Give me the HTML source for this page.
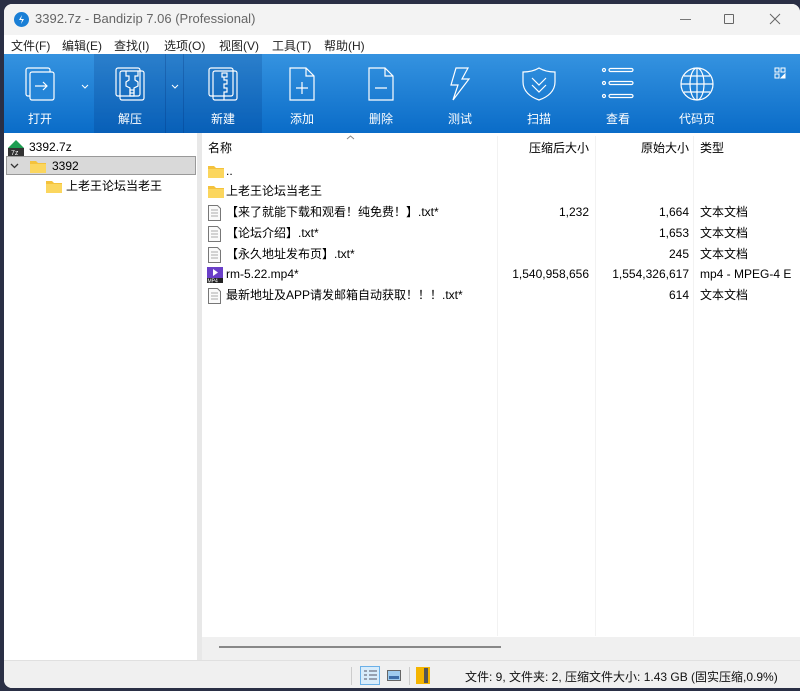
<!DOCTYPE html>
<html><head><meta charset="utf-8"><style>
*{margin:0;padding:0;box-sizing:border-box}
body{width:800px;height:691px;overflow:hidden;background:#2a2f45;font-family:"Liberation Sans","Noto Sans CJK SC",sans-serif;font-size:12px;color:#000;position:relative}
.win{position:absolute;left:4px;top:4px;width:796px;height:684px;background:#f0f0f0;border-radius:8px 8px 0 8px;overflow:hidden}
.abs{position:absolute}
.title{left:0;top:0;width:796px;height:31px;background:#f3f3f3;}
.menu{left:0;top:31px;width:796px;height:20px;background:#fff}
.menu span{position:absolute;top:2px;font-size:12px;color:#222}
.tb{left:0;top:50px;width:796px;height:79px;background:linear-gradient(#3593e0,#0a6cc8)}
.btn{position:absolute;top:0;height:79px;text-align:center;color:#fff;font-size:12px}
.btn svg{position:absolute;top:12px;left:50%;margin-left:-18px}
.btn .l{position:absolute;top:56px;width:100%;left:0}
.left{left:0;top:129px;width:193px;height:527px;background:#fff}
.right{left:198px;top:129px;width:598px;height:527px;background:#fff}
.right span{line-height:14px}
.row{position:absolute;left:0;height:21px;line-height:21px;white-space:nowrap}
.right .row span{line-height:21px}
.n{position:absolute;text-align:right}
.status{left:0;top:656px;width:796px;height:28px;background:#f0f0f0;border-top:1px solid #e0e0e0}
</style></head><body>
<div class="win">
 <div class="abs title">
  <svg class="abs" style="left:10px;top:8px" width="15" height="15"><circle cx="7.5" cy="7.5" r="7.5" fill="#1a7fd6"/><path d="M8 3L5 8h3l-1 4 3-5H7z" fill="#fff"/></svg>
  <span class="abs" style="left:31px;top:7px;font-size:13px;color:#666">3392.7z - Bandizip 7.06 (Professional)</span>
  <div class="abs" style="left:676px;top:15px;width:11px;height:1px;background:#777"></div>
  <div class="abs" style="left:720px;top:10px;width:10px;height:10px;border:1px solid #666;border-radius:1px"></div>
  <svg class="abs" style="left:765px;top:9px" width="12" height="12"><path d="M1 1L11 11M11 1L1 11" stroke="#666" stroke-width="1"/></svg>
 </div>
 <div class="abs menu">
  <span style="left:7px">文件(F)</span><span style="left:58px">编辑(E)</span><span style="left:110px">查找(I)</span><span style="left:160px">选项(O)</span><span style="left:215px">视图(V)</span><span style="left:268px">工具(T)</span><span style="left:320px">帮助(H)</span>
 </div>
 <div class="abs tb">
  <div class="abs" style="left:90px;top:0;width:168px;height:79px;background:rgba(0,40,110,.18)"></div>
  <div class="abs" style="left:161px;top:0;width:1px;height:79px;background:rgba(0,40,110,.25)"></div>
  <div class="abs" style="left:179px;top:0;width:1px;height:79px;background:rgba(0,40,110,.25)"></div>
  <div class="btn" style="left:0;width:72px"><svg width="36" height="36" fill="none" stroke="#fff" stroke-width="1.2"><rect x="4" y="2" width="24" height="28" rx="2"/><rect x="8" y="6" width="24" height="28" rx="2" fill="#2585d8"/><path d="M13 20h12M21 16l4 4-4 4"/></svg><div class="l">打开</div></div>
  <svg class="abs" style="left:77px;top:30px" width="8" height="5" fill="none" stroke="#fff"><path d="M1 1l3 3 3-3"/></svg>
  <div class="btn" style="left:90px;width:72px"><svg width="36" height="36" fill="none" stroke="#fff" stroke-width="1.2"><rect x="4" y="2" width="24" height="28" rx="2"/><rect x="8" y="5" width="24" height="29" rx="2"/><path d="M14 5v5h3v4l-3 2v4l4 2v8h4v-8l4-2v-4l-3-2v-4h3V5"/><rect x="18" y="24" width="4" height="3"/></svg><div class="l">解压</div></div>
  <svg class="abs" style="left:167px;top:30px" width="8" height="5" fill="none" stroke="#fff"><path d="M1 1l3 3 3-3"/></svg>
  <div class="btn" style="left:180px;width:78px"><svg width="36" height="36" fill="none" stroke="#fff" stroke-width="1.2"><rect x="4" y="2" width="24" height="28" rx="2"/><rect x="8" y="5" width="24" height="29" rx="2"/><rect x="17" y="7" width="5" height="4"/><path d="M19 11v3h3v4h-3v4h3v4h-3v8"/></svg><div class="l">新建</div></div>
  <div class="btn" style="left:262px;width:72px"><svg width="36" height="36" fill="none" stroke="#fff" stroke-width="1.2"><path d="M6 2h16l8 8v24H6z M22 2v8h8"/><path d="M18 16v12M12 22h12"/></svg><div class="l">添加</div></div>
  <div class="btn" style="left:341px;width:72px"><svg width="36" height="36" fill="none" stroke="#fff" stroke-width="1.2"><path d="M6 2h16l8 8v24H6z M22 2v8h8"/><path d="M12 22h12"/></svg><div class="l">删除</div></div>
  <div class="btn" style="left:420px;width:72px"><svg width="36" height="36" fill="none" stroke="#fff" stroke-width="1.2"><path d="M14 2h12l-6 11h7L11 34l5-15H9z"/></svg><div class="l">测试</div></div>
  <div class="btn" style="left:499px;width:72px"><svg width="36" height="36" fill="none" stroke="#fff" stroke-width="1.2"><path d="M18 2c5 3 10 4 16 4v10c0 9-7 15-16 18C9 31 2 25 2 16V6c6 0 11-1 16-4z"/><path d="M11 12l7 7 7-7M11 19l7 7 7-7"/></svg><div class="l">扫描</div></div>
  <div class="btn" style="left:578px;width:72px"><svg width="36" height="36" fill="none" stroke="#fff" stroke-width="1.2"><circle cx="4" cy="4" r="1.5"/><circle cx="4" cy="17" r="1.5"/><circle cx="4" cy="30" r="1.5"/><rect x="9" y="2.5" width="24" height="3" rx="1.5"/><rect x="9" y="15.5" width="24" height="3" rx="1.5"/><rect x="9" y="28.5" width="24" height="3" rx="1.5"/></svg><div class="l">查看</div></div>
  <div class="btn" style="left:657px;width:72px"><svg width="36" height="36" fill="none" stroke="#fff" stroke-width="1.2"><circle cx="18" cy="18" r="16"/><ellipse cx="18" cy="18" rx="7" ry="16"/><path d="M18 2v32M2 18h32M5 10h26M5 26h26"/></svg><div class="l">代码页</div></div>
  <svg class="abs" style="left:770px;top:13px" width="12" height="12" fill="none" stroke="#fff"><rect x="1" y="1" width="4" height="4"/><rect x="7" y="1" width="4" height="4"/><rect x="1" y="7" width="4" height="4"/><path d="M11 7v4H7z" fill="#fff"/></svg>
 </div>
 <div class="abs left">
  <div class="row" style="top:4px;left:4px"><svg class="abs" style="left:0;top:3px" width="16" height="16"><path d="M8 0L16 8H0z" fill="#1e9e52"/><rect x="0" y="8" width="16" height="8" fill="#333"/><text x="3" y="15" font-size="7" fill="#fff" font-family="Liberation Sans">7z</text></svg><span style="position:absolute;left:21px">3392.7z</span></div>
  <div class="abs" style="left:2px;top:23px;width:190px;height:19px;background:#d9d9d9;border:1px solid #999"></div>
  <div class="row" style="top:23px;left:6px"><svg class="abs" style="left:0;top:7px" width="9" height="6" fill="none" stroke="#333" stroke-width="1.3"><path d="M1 1l3.5 3.5L8 1"/></svg><svg class="abs" style="left:20px;top:4px" width="16" height="13"><path d="M0 1h6l2 2h8v10H0z" fill="#f4c23c"/><rect y="4" width="16" height="9" fill="#fbd65e"/></svg><span style="position:absolute;left:42px">3392</span></div>
  <div class="row" style="top:43px;left:42px"><svg class="abs" style="left:0;top:4px" width="16" height="13"><path d="M0 1h6l2 2h8v10H0z" fill="#f4c23c"/><rect y="4" width="16" height="9" fill="#fbd65e"/></svg><span style="position:absolute;left:20px">上老王论坛当老王</span></div>
 </div>
 <div class="abs" style="left:193px;top:129px;width:5px;height:527px;background:#e8e8e8"></div>
 <div class="abs right">
  <span class="abs" style="left:6px;top:8px">名称</span>
  <svg class="abs" style="left:144px;top:2px" width="9" height="5" fill="none" stroke="#888"><path d="M1 4l3.5-3L8 4"/></svg>
  <div class="abs" style="left:295px;top:3px;width:1px;height:500px;background:#f2f2f2"></div>
  <div class="abs" style="left:393px;top:3px;width:1px;height:500px;background:#f2f2f2"></div>
  <div class="abs" style="left:491px;top:3px;width:1px;height:500px;background:#f2f2f2"></div>
  <span class="n" style="left:296px;width:91px;top:8px">压缩后大小</span>
  <span class="n" style="left:394px;width:93px;top:8px">原始大小</span>
  <span class="abs" style="left:498px;top:8px">类型</span>
  <div class="row" style="top:28px;left:6px"><svg class="abs" style="left:0;top:4px" width="16" height="13"><path d="M0 1h6l2 2h8v10H0z" fill="#f4c23c"/><rect y="4" width="16" height="9" fill="#fbd65e"/></svg><span style="position:absolute;left:18px">..</span></div>
  <div class="row" style="top:48px;left:6px"><svg class="abs" style="left:0;top:4px" width="16" height="13"><path d="M0 1h6l2 2h8v10H0z" fill="#f4c23c"/><rect y="4" width="16" height="9" fill="#fbd65e"/></svg><span style="position:absolute;left:18px">上老王论坛当老王</span></div>
  <div class="row" style="top:69px;left:6px"><svg class="abs" style="left:0;top:3px" width="13" height="16" fill="#fafafa" stroke="#777"><path d="M.5 .5h9l3 3v12h-12z"/><path d="M3 5h7M3 8h7M3 11h7" stroke="#aaa"/></svg><span style="position:absolute;left:18px">【来了就能下载和观看！纯免费！】.txt*</span></div>
  <span class="n" style="left:296px;width:91px;top:72px">1,232</span><span class="n" style="left:394px;width:93px;top:72px">1,664</span><span class="abs" style="left:498px;top:72px">文本文档</span>
  <div class="row" style="top:90px;left:6px"><svg class="abs" style="left:0;top:3px" width="13" height="16" fill="#fafafa" stroke="#777"><path d="M.5 .5h9l3 3v12h-12z"/><path d="M3 5h7M3 8h7M3 11h7" stroke="#aaa"/></svg><span style="position:absolute;left:18px">【论坛介绍】.txt*</span></div>
  <span class="n" style="left:394px;width:93px;top:93px">1,653</span><span class="abs" style="left:498px;top:93px">文本文档</span>
  <div class="row" style="top:111px;left:6px"><svg class="abs" style="left:0;top:3px" width="13" height="16" fill="#fafafa" stroke="#777"><path d="M.5 .5h9l3 3v12h-12z"/><path d="M3 5h7M3 8h7M3 11h7" stroke="#aaa"/></svg><span style="position:absolute;left:18px">【永久地址发布页】.txt*</span></div>
  <span class="n" style="left:394px;width:93px;top:114px">245</span><span class="abs" style="left:498px;top:114px">文本文档</span>
  <div class="row" style="top:131px;left:5px"><svg class="abs" style="left:0;top:3px" width="16" height="16"><rect width="16" height="11" fill="#6a3fc8"/><path d="M6 2l5 3.5-5 3.5z" fill="#fff"/><rect y="11" width="16" height="5" fill="#222"/><text x="0.5" y="15.5" font-size="5" fill="#fff" font-family="Liberation Sans">MP4</text></svg><span style="position:absolute;left:19px">rm-5.22.mp4*</span></div>
  <span class="n" style="left:296px;width:91px;top:134px">1,540,958,656</span><span class="n" style="left:394px;width:93px;top:134px">1,554,326,617</span><span class="abs" style="left:498px;top:134px;white-space:nowrap">mp4 - MPEG-4 E</span>
  <div class="row" style="top:152px;left:6px"><svg class="abs" style="left:0;top:3px" width="13" height="16" fill="#fafafa" stroke="#777"><path d="M.5 .5h9l3 3v12h-12z"/><path d="M3 5h7M3 8h7M3 11h7" stroke="#aaa"/></svg><span style="position:absolute;left:18px">最新地址及APP请发邮箱自动获取！！！.txt*</span></div>
  <span class="n" style="left:394px;width:93px;top:155px">614</span><span class="abs" style="left:498px;top:155px">文本文档</span>
  <div class="abs" style="left:0;top:504px;width:598px;height:23px;background:#f0f0f0"></div>
  <div class="abs" style="left:17px;top:513px;width:282px;height:2px;background:#888"></div>
 </div>
 <div class="abs status">
  <div class="abs" style="left:347px;top:6px;width:1px;height:18px;background:#ccc"></div>
  <div class="abs" style="left:356px;top:5px;width:20px;height:19px;border:1px solid #6ab0e8;background:#d8ecfb"></div>
  <svg class="abs" style="left:359px;top:9px" width="15" height="11" stroke="#556"><path d="M1 1h3M1 5h3M1 9h3M6 1h8M6 5h8M6 9h8"/></svg>
  <svg class="abs" style="left:383px;top:9px" width="14" height="11"><rect x=".5" y=".5" width="13" height="10" fill="#9ecbee" stroke="#666"/><rect x="2" y="6" width="10" height="3" fill="#3d6ea8"/></svg>
  <div class="abs" style="left:405px;top:6px;width:1px;height:18px;background:#ccc"></div>
  <svg class="abs" style="left:412px;top:6px" width="14" height="17"><rect width="14" height="17" fill="#f4b400"/><rect x="8" y="1" width="4" height="15" fill="#555"/></svg>
  <span class="abs" style="left:461px;top:7px;color:#111">文件: 9, 文件夹: 2, 压缩文件大小: 1.43 GB (固实压缩,0.9%)</span>
 </div>
</div>
</body></html>
